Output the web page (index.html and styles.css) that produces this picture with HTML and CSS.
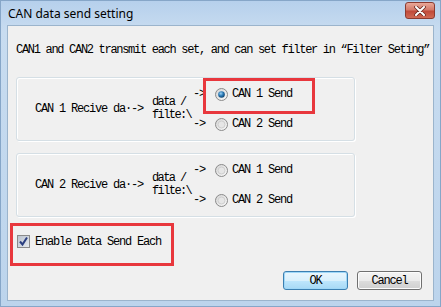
FILE: index.html
```html
<!DOCTYPE html>
<html>
<head>
  <title>CAN data send setting</title>
  <link rel="stylesheet" href="styles.css">
</head>
<body>
  <div class="window">
    <div class="titlebar">
      <span class="title">CAN data send setting</span>
      <div class="close-btn">
        <svg width="14" height="10" viewBox="0 0 14 10">
          <path d="M3 1 L11 9 M11 1 L3 9" stroke="#6a2a22" stroke-width="3.6" stroke-linecap="round"/>
          <path d="M3 1 L11 9 M11 1 L3 9" stroke="#ffffff" stroke-width="2" stroke-linecap="round"/>
        </svg>
      </div>
    </div>

    <div class="client">
      <p class="intro">CAN1 and CAN2 transmit each set, and can set filter in “Filter Seting”</p>

      <div class="group">
        <span class="recv">CAN 1 Recive da·-&gt;</span>
        <span class="filter"><span>data /</span><span>filte:\</span></span>
        <div class="choices">
          <label class="radio">
            <span class="arrow">-&gt;</span>
            <svg width="13" height="13" viewBox="0 0 13 13">
              <defs>
                <linearGradient id="rbg1" x1="0" y1="0" x2="1" y2="1">
                  <stop offset="0" stop-color="#d4d4d4"/>
                  <stop offset="1" stop-color="#fbfbfb"/>
                </linearGradient>
                <radialGradient id="dot1" cx="0.4" cy="0.35" r="0.7">
                  <stop offset="0" stop-color="#9fd3f5"/>
                  <stop offset="0.5" stop-color="#2a7ab6"/>
                  <stop offset="1" stop-color="#0d3d66"/>
                </radialGradient>
              </defs>
              <circle cx="6.5" cy="6.5" r="6" fill="url(#rbg1)" stroke="#8a8a8a"/>
              <circle cx="6.5" cy="6.5" r="3.3" fill="url(#dot1)"/>
            </svg>
            <span>CAN 1 Send</span>
          </label>
          <label class="radio">
            <span class="arrow">-&gt;</span>
            <svg width="13" height="13" viewBox="0 0 13 13">
              <circle cx="6.5" cy="6.5" r="6" fill="url(#rbg1)" stroke="#8a8a8a"/>
              <circle cx="6.5" cy="6.5" r="3.5" fill="#e6e6e6" stroke="#cfcfcf"/>
            </svg>
            <span>CAN 2 Send</span>
          </label>
        </div>
      </div>

      <div class="group second">
        <span class="recv">CAN 2 Recive da·-&gt;</span>
        <span class="filter"><span>data /</span><span>filte:\</span></span>
        <div class="choices">
          <label class="radio">
            <span class="arrow">-&gt;</span>
            <svg width="13" height="13" viewBox="0 0 13 13">
              <circle cx="6.5" cy="6.5" r="6" fill="url(#rbg1)" stroke="#8a8a8a"/>
              <circle cx="6.5" cy="6.5" r="3.5" fill="#e6e6e6" stroke="#cfcfcf"/>
            </svg>
            <span>CAN 1 Send</span>
          </label>
          <label class="radio">
            <span class="arrow">-&gt;</span>
            <svg width="13" height="13" viewBox="0 0 13 13">
              <circle cx="6.5" cy="6.5" r="6" fill="url(#rbg1)" stroke="#8a8a8a"/>
              <circle cx="6.5" cy="6.5" r="3.5" fill="#e6e6e6" stroke="#cfcfcf"/>
            </svg>
            <span>CAN 2 Send</span>
          </label>
        </div>
      </div>

      <label class="check">
        <svg width="13" height="13" viewBox="0 0 13 13">
          <defs>
            <linearGradient id="cbg" x1="0" y1="0" x2="1" y2="1">
              <stop offset="0" stop-color="#b8c0cc"/>
              <stop offset="1" stop-color="#e8ecf0"/>
            </linearGradient>
          </defs>
          <rect x="0.5" y="0.5" width="12" height="12" fill="url(#cbg)" stroke="#8a8a8a"/>
          <path d="M3 6.5 L5.5 9.5 L10 2.5" fill="none" stroke="#2b3f80" stroke-width="2"/>
        </svg>
        <span>Enable Data Send Each</span>
      </label>

      <div class="buttons">
        <button class="btn default">OK</button>
        <button class="btn">Cancel</button>
      </div>

      <div class="mark mark-radio"></div>
      <div class="mark mark-check"></div>
    </div>
  </div>
</body>
</html>
```

FILE: styles.css
```css
body {
  margin: 0;
  font-family: "Liberation Mono", monospace;
}

.window {
  width: 441px;
  height: 307px;
  box-sizing: border-box;
  border: 1px solid #86a6c8;
  background: linear-gradient(#b6d0ec, #c8dcf0 30px, #bcd4ec);
  display: flex;
  flex-direction: column;
}

.titlebar {
  height: 24px;
  display: flex;
  justify-content: space-between;
  align-items: flex-start;
  padding: 0 5px 0 7px;
}

.title {
  font-family: "Noto Sans", sans-serif;
  font-size: 12px;
  line-height: 16px;
  padding-top: 5px;
  color: #000;
}

.close-btn {
  width: 30px;
  height: 17px;
  margin-top: 1px;
  box-sizing: border-box;
  border: 1px solid #8b3b31;
  border-radius: 3px;
  background: linear-gradient(#e9a898, #d47a6a 45%, #c04a3a 55%, #d06a55);
  display: flex;
  align-items: center;
  justify-content: center;
}

.client {
  position: relative;
  flex: 1;
  margin: 0 6px 5px 6px;
  border: 1px solid #9bb4cc;
  background: #f0f0f0;
  padding: 18px 0 0 8px;
  overflow: hidden;
  font-size: 12px;
  letter-spacing: -1.2px;
  color: #000;
}

.intro {
  margin: 0;
  line-height: 12px;
  white-space: nowrap;
  letter-spacing: -1.3px;
}

.group {
  margin-top: 21px;
  width: 339px;
  height: 64px;
  box-sizing: border-box;
  border: 1px solid #d5dfe5;
  border-radius: 3px;
  box-shadow: inset 1px 1px 0 #fff, 1px 1px 0 #fff;
  padding: 1px 0 1px 18px;
  display: flex;
  align-items: center;
}

.group.second {
  margin-top: 12px;
}

.recv {
  width: 117px;
}

.filter {
  width: 41px;
  display: flex;
  flex-direction: column;
  line-height: 13px;
  letter-spacing: -1.6px;
}

.choices {
  display: flex;
  flex-direction: column;
}

.radio {
  height: 30px;
  display: flex;
  align-items: center;
  gap: 4px;
}

.arrow {
  width: 18px;
}

.check {
  margin: 18px 0 0 1px;
  display: flex;
  align-items: center;
  gap: 5px;
  height: 13px;
}

.buttons {
  margin-top: 23px;
  padding-right: 11px;
  display: flex;
  justify-content: flex-end;
  gap: 9px;
}

.btn {
  width: 65px;
  height: 19px;
  padding: 0;
  font-family: "Liberation Mono", monospace;
  font-size: 12px;
  letter-spacing: -1.2px;
  color: #000;
  border: 1px solid #707070;
  border-radius: 3px;
  background: linear-gradient(#f4f4f4, #ebebeb 50%, #dddddd 51%, #cfcfcf);
  box-shadow: inset 0 0 0 1px #fcfcfc;
}

.btn.default {
  border-color: #3c7fb1;
  background: linear-gradient(#eaf6fd, #d9f0fc 50%, #bee6fd 51%, #a7d9f5);
  box-shadow: inset 0 0 0 1px #a0d8f8;
}

/* red annotation boxes */
.mark {
  position: absolute;
  border: 3px solid #e8373d;
  box-sizing: border-box;
}

.mark-radio {
  left: 195px;
  top: 52px;
  width: 112px;
  height: 36px;
}

.mark-check {
  left: 2px;
  top: 197px;
  width: 164px;
  height: 43px;
}
```
